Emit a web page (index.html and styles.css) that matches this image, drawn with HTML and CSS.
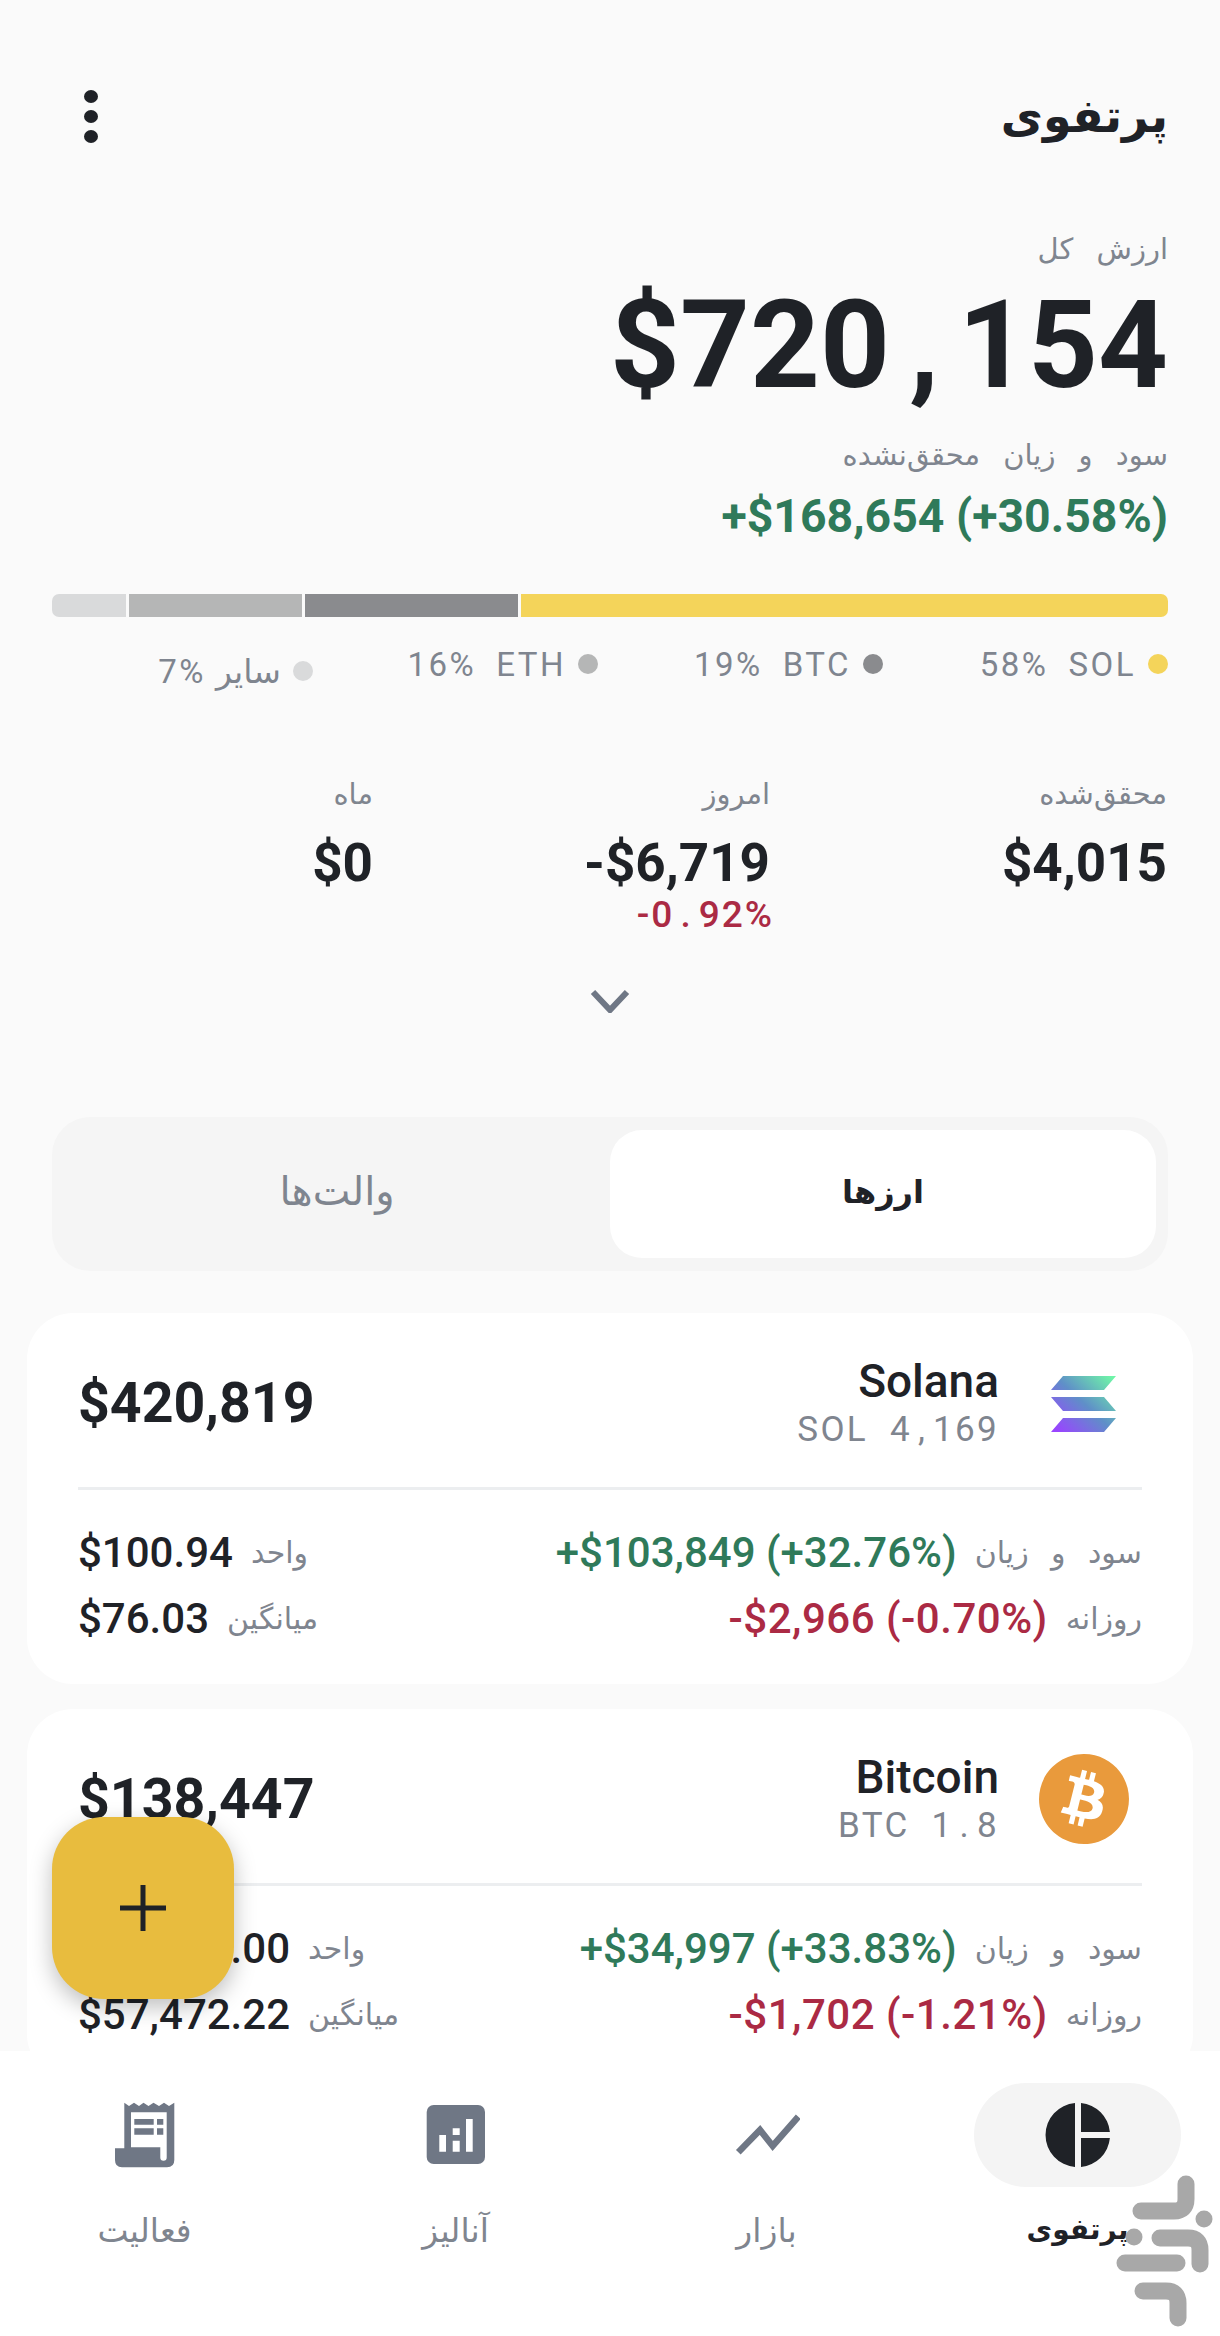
FILE: index.html
```html
<!DOCTYPE html>
<html lang="fa" dir="rtl">
<head>
    <meta charset="UTF-8">
    <meta name="viewport" content="width=device-width, initial-scale=1.0">
    <title>پرتفوی</title>
    <link rel="stylesheet" href="styles.css">
</head>
<body>
    <div class="screen">
        <header class="top-bar">
            <h1>پرتفوی</h1>
            <div class="menu-dots"><span></span><span></span><span></span></div>
        </header>

        <section class="summary">
            <div class="label">ارزش کل</div>
            <div class="total" dir="ltr">$720<span class="sep">,</span>154</div>
            <div class="label label-pnl">سود و زیان محقق‌نشده</div>
            <div class="total-pnl up" dir="ltr">+$168,654 (+30.58%)</div>
        </section>

        <div class="alloc-bar">
            <div class="seg seg-sol"></div>
            <div class="seg seg-btc"></div>
            <div class="seg seg-eth"></div>
            <div class="seg seg-other"></div>
        </div>

        <div class="legend">
            <div class="legend-item"><i class="dot dot-sol"></i><span>SOL</span><span dir="ltr">58%</span></div>
            <div class="legend-item"><i class="dot dot-btc"></i><span>BTC</span><span dir="ltr">19%</span></div>
            <div class="legend-item"><i class="dot dot-eth"></i><span>ETH</span><span dir="ltr">16%</span></div>
            <div class="legend-item legend-other"><i class="dot dot-other"></i><span>سایر</span><span dir="ltr">7%</span></div>
        </div>

        <div class="stats">
            <div class="stat">
                <div class="label">محقق‌شده</div>
                <div class="stat-value" dir="ltr">$4,015</div>
            </div>
            <div class="stat">
                <div class="label">امروز</div>
                <div class="stat-value" dir="ltr">-$6,719</div>
                <div class="stat-change down" dir="ltr">-0<span class="sep-small">.</span>92%</div>
            </div>
            <div class="stat">
                <div class="label">ماه</div>
                <div class="stat-value" dir="ltr">$0</div>
            </div>
        </div>

        <div class="chevron">
            <svg width="40" height="24" viewBox="0 0 40 24"><path d="M3 3 L20 21 L37 3" fill="none" stroke="#6f7785" stroke-width="6"/></svg>
        </div>

        <div class="tabs">
            <button class="tab active">ارزها</button>
            <button class="tab">والت‌ها</button>
        </div>

        <div class="card">
            <div class="card-head">
                <svg class="coin" width="90" height="90" viewBox="0 0 90 90">
                    <defs>
                        <linearGradient id="solGrad" gradientUnits="userSpaceOnUse" x1="20" y1="74" x2="72" y2="18">
                            <stop offset="0" stop-color="#9945ff"/>
                            <stop offset="0.5" stop-color="#5f8fc8"/>
                            <stop offset="1" stop-color="#6ff5a8"/>
                        </linearGradient>
                    </defs>
                    <path fill="url(#solGrad)" d="M24 18 H77 L65 32 H12 Z M12 39 H65 L77 53 H24 Z M24 60 H77 L65 74 H12 Z"/>
                </svg>
                <div class="coin-name">
                    <div class="name">Solana</div>
                    <div class="amount" dir="ltr">SOL&nbsp;&nbsp;4<span class="sep-small">,</span>169</div>
                </div>
                <div class="coin-value" dir="ltr">$420,819</div>
            </div>
            <div class="card-rows">
                <div class="row">
                    <div class="cell"><span class="cell-label">سود و زیان</span><span class="cell-num up" dir="ltr">+$103,849 (+32.76%)</span></div>
                    <div class="cell"><span class="cell-label">واحد</span><span class="cell-num" dir="ltr">$100.94</span></div>
                </div>
                <div class="row">
                    <div class="cell"><span class="cell-label">روزانه</span><span class="cell-num down" dir="ltr">-$2,966 (-0.70%)</span></div>
                    <div class="cell"><span class="cell-label">میانگین</span><span class="cell-num" dir="ltr">$76.03</span></div>
                </div>
            </div>
        </div>

        <div class="card">
            <div class="card-head">
                <svg class="coin" width="90" height="90" viewBox="0 0 24 24">
                    <path fill="#e99a3c" d="M23.638 14.904c-1.602 6.43-8.113 10.34-14.542 8.736C2.67 22.05-1.244 15.525.362 9.105 1.962 2.67 8.475-1.243 14.9.358c6.43 1.605 10.342 8.115 8.738 14.548v-.002zm-6.35-4.613c.24-1.59-.974-2.45-2.64-3.03l.54-2.153-1.315-.33-.525 2.107c-.345-.087-.705-.167-1.064-.25l.526-2.127-1.32-.33-.54 2.165c-.285-.067-.565-.132-.84-.2l-1.815-.45-.35 1.407s.975.225.955.236c.535.136.63.486.615.766l-1.477 5.92c-.075.166-.24.406-.614.314.015.02-.96-.24-.96-.24l-.66 1.51 1.71.426.93.242-.54 2.19 1.32.327.54-2.17c.36.1.705.19 1.05.273l-.51 2.154 1.32.33.545-2.19c2.24.427 3.93.257 4.64-1.774.57-1.637-.03-2.58-1.217-3.196.854-.193 1.5-.76 1.68-1.93h.01zm-3.01 4.22c-.404 1.64-3.157.75-4.05.53l.72-2.9c.896.23 3.757.67 3.33 2.37zm.41-4.24c-.37 1.49-2.662.735-3.405.55l.654-2.64c.744.18 3.137.524 2.75 2.084v.006z"/>
                </svg>
                <div class="coin-name">
                    <div class="name">Bitcoin</div>
                    <div class="amount" dir="ltr">BTC&nbsp;&nbsp;1<span class="sep-small">.</span>8</div>
                </div>
                <div class="coin-value" dir="ltr">$138,447</div>
            </div>
            <div class="card-rows">
                <div class="row">
                    <div class="cell"><span class="cell-label">سود و زیان</span><span class="cell-num up" dir="ltr">+$34,997 (+33.83%)</span></div>
                    <div class="cell"><span class="cell-label">واحد</span><span class="cell-num" dir="ltr">$76,942.00</span></div>
                </div>
                <div class="row">
                    <div class="cell"><span class="cell-label">روزانه</span><span class="cell-num down" dir="ltr">-$1,702 (-1.21%)</span></div>
                    <div class="cell"><span class="cell-label">میانگین</span><span class="cell-num" dir="ltr">$57,472.22</span></div>
                </div>
            </div>
        </div>

        <button class="fab">
            <svg width="48" height="48" viewBox="0 0 48 48"><path d="M24 1 V47 M1 24 H47" stroke="#1f2227" stroke-width="5"/></svg>
        </button>

        <nav class="bottom-nav">
            <div class="nav-item active">
                <div class="nav-icon">
                    <svg width="66" height="66" viewBox="0 0 66 66">
                        <path fill="#1f2227" d="M30 1.1 A32 32 0 0 0 30 64.9 Z M36 1.1 A32 32 0 0 1 64.9 30 H36 Z M36 36 H64.9 A32 32 0 0 1 36 64.9 Z"/>
                    </svg>
                </div>
                <span>پرتفوی</span>
            </div>
            <div class="nav-item">
                <div class="nav-icon">
                    <svg width="66" height="66" viewBox="0 0 66 66">
                        <path fill="none" stroke="#6f7785" stroke-width="6.5" d="M4.3 50.3 L26 28 L38.7 44 L64.3 14.7"/>
                    </svg>
                </div>
                <span>بازار</span>
            </div>
            <div class="nav-item">
                <div class="nav-icon">
                    <svg width="66" height="66" viewBox="0 0 66 66">
                        <rect x="3.7" y="3" width="58.3" height="59" rx="7" fill="#6f7785"/>
                        <path fill="#fff" d="M16.3 33 H23 V49.7 H16.3 Z M29.7 38.7 H36.7 V49.7 H29.7 Z M29.7 26.3 H36.7 V33 H29.7 Z M43 17 H49.7 V49.7 H43 Z"/>
                    </svg>
                </div>
                <span>آنالیز</span>
            </div>
            <div class="nav-item">
                <div class="nav-icon">
                    <svg width="66" height="66" viewBox="0 0 66 66">
                        <path fill="#6f7785" d="M12.3 .7 L17 4 L22 .7 L27 4 L31.5 .7 L36.5 4 L41.5 .7 L47 4 L52 .7 L57 4 L62.3 .7 V58 Q62.3 65.3 55 65.3 H10 Q3 65.3 3 58 V46.3 H12.3 Z"/>
                        <path fill="#fff" d="M19 10.3 H54.7 V55.5 A3.2 3.2 0 0 1 48.3 55.5 V45.3 H19 Z"/>
                        <path fill="#6f7785" d="M22.3 17 H41.7 V22.7 H22.3 Z M45 17 H51.3 V22.7 H45 Z M22.3 26.3 H41.7 V32.7 H22.3 Z M45 26.3 H51.3 V32.7 H45 Z"/>
                    </svg>
                </div>
                <span>فعالیت</span>
            </div>
        </nav>

        <svg class="watermark" width="104" height="164" viewBox="0 0 104 164">
            <g fill="none" stroke="#a8a8a8" stroke-width="17" stroke-linecap="round" stroke-linejoin="round">
                <path d="M25 43 H58 Q70 43 70 31 V16"/>
                <path d="M44 70 H72 Q84 70 84 82 V96"/>
                <path d="M9 95 H61"/>
                <path d="M27 123 H50 Q62 123 62 135 V150"/>
            </g>
            <circle cx="88" cy="51" r="8.5" fill="#a8a8a8"/>
            <circle cx="18" cy="69" r="8.5" fill="#a8a8a8"/>
        </svg>
    </div>
</body>
</html>
```

FILE: styles.css
```css
* {
    box-sizing: border-box;
}

html, body {
    margin: 0;
    padding: 0;
}

body {
    font-family: 'Roboto', 'DejaVu Sans', sans-serif;
    background-color: #fafafa;
    color: #1f2227;
}

.screen {
    position: relative;
    width: 1220px;
    height: 2336px;
    overflow: hidden;
}

.top-bar {
    display: flex;
    justify-content: space-between;
    align-items: center;
    height: 84px;
    margin: 74px 52px 0 84px;
}

.top-bar h1 {
    margin: 0;
    font-size: 46px;
    font-weight: 700;
}

.menu-dots {
    display: flex;
    flex-direction: column;
    gap: 7px;
}

.menu-dots span {
    display: block;
    width: 14px;
    height: 13px;
    border-radius: 50%;
    background-color: #1f2227;
}

.summary {
    margin: 69px 52px 0;
}

.label {
    color: #7f858f;
    font-size: 29px;
    word-spacing: 16px;
    line-height: 44px;
}

.total {
    font-size: 122px;
    font-weight: 700;
    line-height: 144px;
    text-align: right;
    margin-top: 3px;
}

.sep {
    margin: 0 19px;
}

.label-pnl {
    margin-top: 15px;
}

.total-pnl {
    font-size: 46.4px;
    font-weight: 700;
    line-height: 60px;
    text-align: right;
    margin-top: 9px;
}

.up {
    color: #2f7a5a;
}

.down {
    color: #ab2a44;
}

.alloc-bar {
    display: flex;
    gap: 3px;
    height: 23px;
    margin: 48px 52px 0;
    border-radius: 7px;
    overflow: hidden;
}

.seg-sol { width: 647px; background-color: #f4d45a; }
.seg-btc { width: 213px; background-color: #8a8b8e; }
.seg-eth { width: 173px; background-color: #b5b6b6; }
.seg-other { width: 74px; background-color: #d9dadb; }

.legend {
    display: grid;
    grid-template-columns: repeat(4, 285px);
    margin: 22px 52px 0;
    height: 48px;
}

.legend-item {
    display: flex;
    align-items: center;
    gap: 12px;
    font-size: 33px;
    letter-spacing: 2.5px;
    color: #7f858f;
}

.legend-item span + span {
    margin-right: 8px;
}

.legend-other {
    margin-top: 14px;
    height: 36px;
}

.legend-other span + span {
    margin-right: -2px;
}

.dot {
    flex: none;
    width: 20px;
    height: 20px;
    border-radius: 50%;
}

.dot-sol { background-color: #f4d45a; }
.dot-btc { background-color: #8a8b8e; }
.dot-eth { background-color: #b5b6b6; }
.dot-other { background-color: #d9dadb; }

.stats {
    display: grid;
    grid-template-columns: repeat(3, 397px);
    margin: 85px 53px 0 0;
}

.stat-value {
    font-size: 53px;
    font-weight: 700;
    line-height: 60px;
    text-align: right;
    margin-top: 17px;
}

.stat-change {
    font-size: 37px;
    font-weight: 500;
    letter-spacing: 2px;
    line-height: 44px;
    text-align: right;
    margin-right: -4px;
}

.sep-small {
    margin: 0 6px;
}

.chevron {
    display: flex;
    justify-content: center;
    margin-top: 52px;
}

.tabs {
    display: flex;
    height: 154px;
    margin: 104px 52px 0;
    padding: 13px 12px;
    background-color: #f5f5f5;
    border-radius: 38px;
}

.tab {
    flex: 1;
    border: none;
    background: none;
    border-radius: 32px;
    padding: 0 0 5px;
    font-family: inherit;
    font-size: 40px;
    color: #7f858f;
}

.tab.active {
    background-color: #fff;
    color: #1f2227;
    font-size: 32px;
    font-weight: 700;
}

.card {
    margin: 42px 27px 0;
    height: 371px;
    background-color: #fff;
    border-radius: 46px;
    padding: 0 51px;
}

.card + .card {
    margin-top: 25px;
}

.card-head {
    display: flex;
    align-items: center;
    height: 177px;
    padding-top: 6px;
    border-bottom: 3px solid #eceef0;
}

.coin {
    flex: none;
    margin-right: 13px;
    margin-left: 40px;
}

.coin-name {
    flex: 1;
}

.name {
    font-size: 46px;
    font-weight: 500;
    line-height: 50px;
}

.amount {
    font-size: 35px;
    letter-spacing: 2.3px;
    color: #7f858f;
    line-height: 42px;
    text-align: right;
    margin-top: 3px;
}

.coin-value {
    font-size: 55.5px;
    font-weight: 700;
}

.card-rows {
    padding-top: 29px;
}

.row {
    display: flex;
    justify-content: space-between;
    align-items: center;
    height: 66px;
}

.cell {
    display: flex;
    align-items: center;
    gap: 18px;
}

.cell-label {
    font-size: 30px;
    word-spacing: 15px;
    color: #7f858f;
}

.cell-num {
    font-size: 42px;
    font-weight: 500;
}

.cell-num.down {
    letter-spacing: 0.5px;
}

.fab {
    position: absolute;
    left: 52px;
    top: 1817px;
    width: 182px;
    height: 182px;
    display: flex;
    align-items: center;
    justify-content: center;
    border: none;
    border-radius: 52px;
    background-color: #e8bc3e;
    box-shadow: 0 8px 22px rgba(0, 0, 0, 0.25);
}

.bottom-nav {
    position: absolute;
    left: 0;
    right: 0;
    bottom: 0;
    height: 285px;
    display: grid;
    grid-template-columns: repeat(4, 207px);
    justify-content: space-between;
    padding: 32px 39px 0 41px;
    background-color: #fff;
}

.nav-item {
    display: flex;
    flex-direction: column;
    align-items: center;
    color: #7f858f;
    font-size: 33px;
}

.nav-icon {
    width: 207px;
    height: 104px;
    display: flex;
    align-items: center;
    justify-content: center;
    border-radius: 52px;
}

.nav-item span {
    margin-top: 24px;
}

.nav-item.active .nav-icon {
    background-color: #f4f4f4;
}

.nav-item.active span {
    color: #1f2227;
    font-size: 28px;
    font-weight: 700;
    line-height: 38px;
}

.watermark {
    position: absolute;
    left: 1116px;
    top: 2168px;
}
```
